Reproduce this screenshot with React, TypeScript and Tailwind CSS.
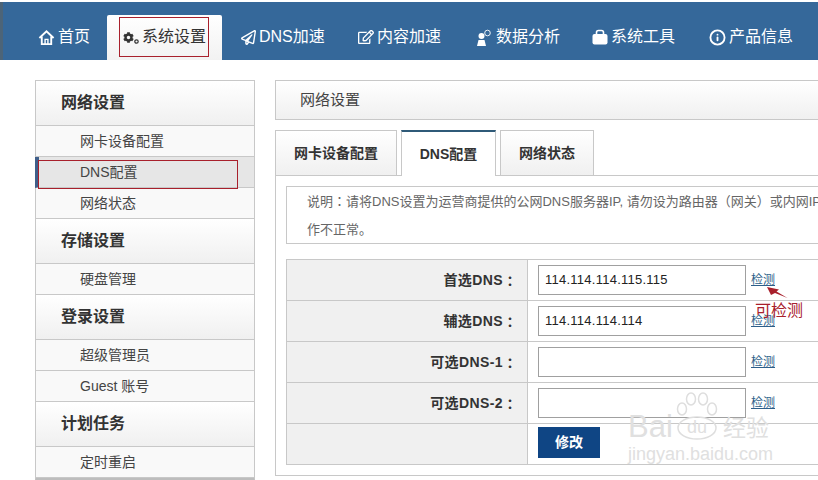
import { FaCog, FaRegEdit, FaRegPaperPlane } from "react-icons/fa";
import { FiInfo } from "react-icons/fi";

const font = "font-['Liberation_Sans','Noto_Sans_CJK_SC',sans-serif]";

function HomeIcon() {
  return (
    <svg width="17" height="17" viewBox="0 0 18 18" fill="none" stroke="currentColor" strokeWidth="2">
      <path d="M1.5 9.5 L9 2.5 L16.5 9.5" />
      <path d="M4 8 V16 H14 V8" />
      <path d="M7.5 16 V11 H10.5 V16" strokeWidth="1.5" />
    </svg>
  );
}

function GearsIcon() {
  return (
    <span className="flex items-end w-[16px] text-[#333]">
      <FaCog size={11} />
      <svg width="5" height="5" viewBox="0 0 5 5" className="mb-[-1px]">
        <circle cx="2.5" cy="2.5" r="1.7" fill="none" stroke="currentColor" strokeWidth="1.2" />
      </svg>
    </span>
  );
}

function UserIcon() {
  return (
    <svg width="17" height="17" viewBox="0 0 17 17">
      <circle cx="5.5" cy="7" r="3" fill="currentColor" />
      <path d="M1 17 L2.5 11 H8.5 L10 17 Z" fill="currentColor" />
      <circle cx="11.5" cy="4" r="2.8" fill="none" stroke="currentColor" strokeWidth="0.9" />
    </svg>
  );
}

function CaseIcon() {
  return (
    <svg width="16" height="16" viewBox="0 0 16 16">
      <rect x="0.5" y="5" width="15" height="10.5" rx="2" fill="currentColor" />
      <path d="M4.5 5.5 V3.5 Q4.5 1.5 6.5 1.5 H9.5 Q11.5 1.5 11.5 3.5 V5.5" fill="none" stroke="currentColor" strokeWidth="1.6" />
    </svg>
  );
}

const navItems = [
  { label: "首页", icon: <HomeIcon />, cls: "w-[104px] pl-[35px]" },
  { label: "系统设置", icon: <GearsIcon />, active: true },
  { label: "DNS加速", icon: <FaRegPaperPlane size={15} />, cls: "w-[117px] pl-[19px]" },
  { label: "内容加速", icon: <FaRegEdit size={16} />, cls: "w-[119px] pl-[19px]" },
  { label: "数据分析", icon: <UserIcon />, cls: "w-[116px] pl-[18px]" },
  { label: "系统工具", icon: <CaseIcon />, cls: "w-[117px] pl-[18px]" },
  { label: "产品信息", icon: <FiInfo size={17} strokeWidth={2.6} />, cls: "w-[108px] pl-[18px]" },
];

const sideGroups = [
  { title: "网络设置", items: ["网卡设备配置", "DNS配置", "网络状态"] },
  { title: "存储设置", items: ["硬盘管理"] },
  { title: "登录设置", items: ["超级管理员", "Guest 账号"] },
  { title: "计划任务", items: ["定时重启"] },
];

const dnsRows = [
  { label: "首选DNS", value: "114.114.114.115.115" },
  { label: "辅选DNS", value: "114.114.114.114" },
  { label: "可选DNS-1", value: "" },
  { label: "可选DNS-2", value: "" },
];

function Sidebar() {
  return (
    <div className="w-[220px] shrink-0 border-x border-t border-[#c8c8c8] border-b-[3px] border-b-[#bdbdbd]">
      {sideGroups.map((g) => (
        <div key={g.title}>
          <div className="h-[45px] pl-[25px] flex items-center text-[16px] font-bold text-[#333] bg-gradient-to-b from-white to-[#f0f0f0] border-b border-[#c8c8c8]">
            {g.title}
          </div>
          {g.items.map((it) => {
            const on = it === "DNS配置";
            return (
              <div
                key={it}
                className={`h-[31px] flex items-center text-[14px] text-[#444] border-b border-[#c8c8c8] ${
                  on ? "bg-[#e6e6e6] border-l-[4px] border-l-[#3f5f8a] -ml-px pl-[41px]" : "bg-[#f9f9f9] pl-[44px]"
                }`}
              >
                {it}
              </div>
            );
          })}
        </div>
      ))}
    </div>
  );
}

function DnsTable() {
  return (
    <div className="w-[560px] border border-[#c8c8c8] mt-[15px] text-[14px]">
      {dnsRows.map((r) => (
        <div key={r.label} className="flex h-[41px] border-b border-[#c8c8c8]">
          <div className="w-[241px] shrink-0 bg-[#f0f0f0] border-r border-[#c8c8c8] flex items-center justify-end pr-[10px] font-bold text-[#333] tracking-[0.4px]">
            {r.label}
            <span className="font-['Noto_Sans_CJK_TC',sans-serif] tracking-normal">：</span>
          </div>
          <div className="flex-1 flex items-center pl-[10px]">
            <div className="w-[208px] h-[30px] border border-[#a0a0a0] flex items-center pl-[6px] text-[13px] text-[#222] tracking-[0.25px]">
              {r.value}
            </div>
            <span className="ml-[5px] text-[12px] text-[#2d5f8a] underline">检测</span>
          </div>
        </div>
      ))}
      <div className="flex h-[40px]">
        <div className="w-[241px] shrink-0 bg-[#f0f0f0] border-r border-[#c8c8c8]" />
        <div className="flex-1 pl-[10px] pt-[3px]">
          <button className="w-[62px] h-[31px] bg-[#0f4584] text-white text-[14px] font-bold">修改</button>
        </div>
      </div>
    </div>
  );
}

function Main() {
  return (
    <div className="flex-1 min-w-0 overflow-hidden">
      <div className="w-[600px] h-[40px] border border-[#c8c8c8] border-r-0 bg-gradient-to-b from-white to-[#f0f0f0] flex items-center pl-[24px] text-[15px] text-[#444]">
        网络设置
      </div>
      <div className="flex mt-[10px] text-[14px] font-bold text-[#333] h-[46px]">
        <div className="w-[122px] border border-[#c8c8c8] bg-gradient-to-b from-white to-[#f0f0f0] flex items-center justify-center">
          网卡设备配置
        </div>
        <div className="relative z-10 w-[95px] ml-[4px] border-x border-[#c8c8c8] border-t-2 border-t-[#2f5a78] bg-white flex items-center justify-center">
          DNS配置
        </div>
        <div className="w-[94px] ml-[4px] border border-[#c8c8c8] bg-gradient-to-b from-white to-[#f0f0f0] flex items-center justify-center">
          网络状态
        </div>
      </div>
      <div className="w-[600px] h-[301px] -mt-px border-l border-t border-b border-[#c8c8c8] pl-[10px] pt-[10px]">
        <div className="w-[560px] h-[58px] border border-[#c8c8c8] pl-[20px] text-[13px] text-[#666] leading-[28px] whitespace-nowrap overflow-hidden">
          说明<span className="font-['Noto_Sans_CJK_TC',sans-serif]">：</span>请将DNS设置为运营商提供的公网DNS服务器IP, 请勿设为路由器（网关）或内网IP，否则可能导致设备工
          <br />
          作不正常。
        </div>
        <DnsTable />
      </div>
    </div>
  );
}

export default function App() {
  return (
    <div className={`relative w-[818px] h-[480px] overflow-hidden bg-white ${font}`}>
      <div className="mt-[2px] h-[58px] bg-[#35689a] border-l-[3px] border-l-[#4c6478] flex items-end text-white text-[16px]">
        {navItems.map((n) => (
          <div
            key={n.label}
            className={`h-[45px] flex items-center gap-[3px] pb-[1px] shrink-0 ${
              n.active ? "w-[115px] pl-[16px] rounded-t-[2px] bg-gradient-to-b from-white to-[#f2f2f2] text-[#333]" : n.cls
            }`}
          >
            {n.icon}
            <span className="whitespace-nowrap">{n.label}</span>
          </div>
        ))}
      </div>

      <div className="flex gap-[20px] pl-[35px] pt-[20px]">
        <Sidebar />
        <Main />
      </div>

      {/* hand-drawn annotations on the screenshot */}
      <div className="absolute left-[119px] top-[17px] w-[90px] h-[40px] border border-[#a8202c]" />
      <div className="absolute left-[38px] top-[160px] w-[200px] h-[29px] border border-[#a8202c]" />
      <svg className="absolute left-[760px] top-[280px]" width="32" height="24" viewBox="0 0 32 24">
        <path d="M7 7 L19 9.5 L16.5 11.5 L27.5 18 L15 13 L11 15 Z" fill="#a8202c" />
      </svg>
      <span className="absolute left-[755px] top-[301px] text-[16px] leading-[20px] text-[#a8202c]">可检测</span>

      {/* watermark */}
      <div className="absolute left-[628px] top-[392px] w-[150px] h-[72px] pointer-events-none text-[#e0e0e0]">
        <svg className="absolute left-[47px] top-0" width="46" height="48" viewBox="0 0 46 48" fill="none" stroke="#dedede" strokeWidth="1.5">
          <ellipse cx="7" cy="17" rx="4.5" ry="6" />
          <ellipse cx="16" cy="7" rx="4.5" ry="6" />
          <ellipse cx="28" cy="7" rx="4.5" ry="6" />
          <ellipse cx="37" cy="17" rx="4.5" ry="6" />
          <ellipse cx="22" cy="36" rx="19" ry="11" />
        </svg>
        <span className="absolute left-0 top-[20px] text-[31px] leading-[30px]">Bai</span>
        <span className="absolute left-[59px] top-[24px] text-[18px] leading-[22px]">du</span>
        <span className="absolute left-[95px] top-[23px] text-[23px] leading-[26px] whitespace-nowrap">经验</span>
        <span className="absolute left-0 top-[52px] text-[18px] leading-[20px] whitespace-nowrap">jingyan.baidu.com</span>
      </div>
    </div>
  );
}
